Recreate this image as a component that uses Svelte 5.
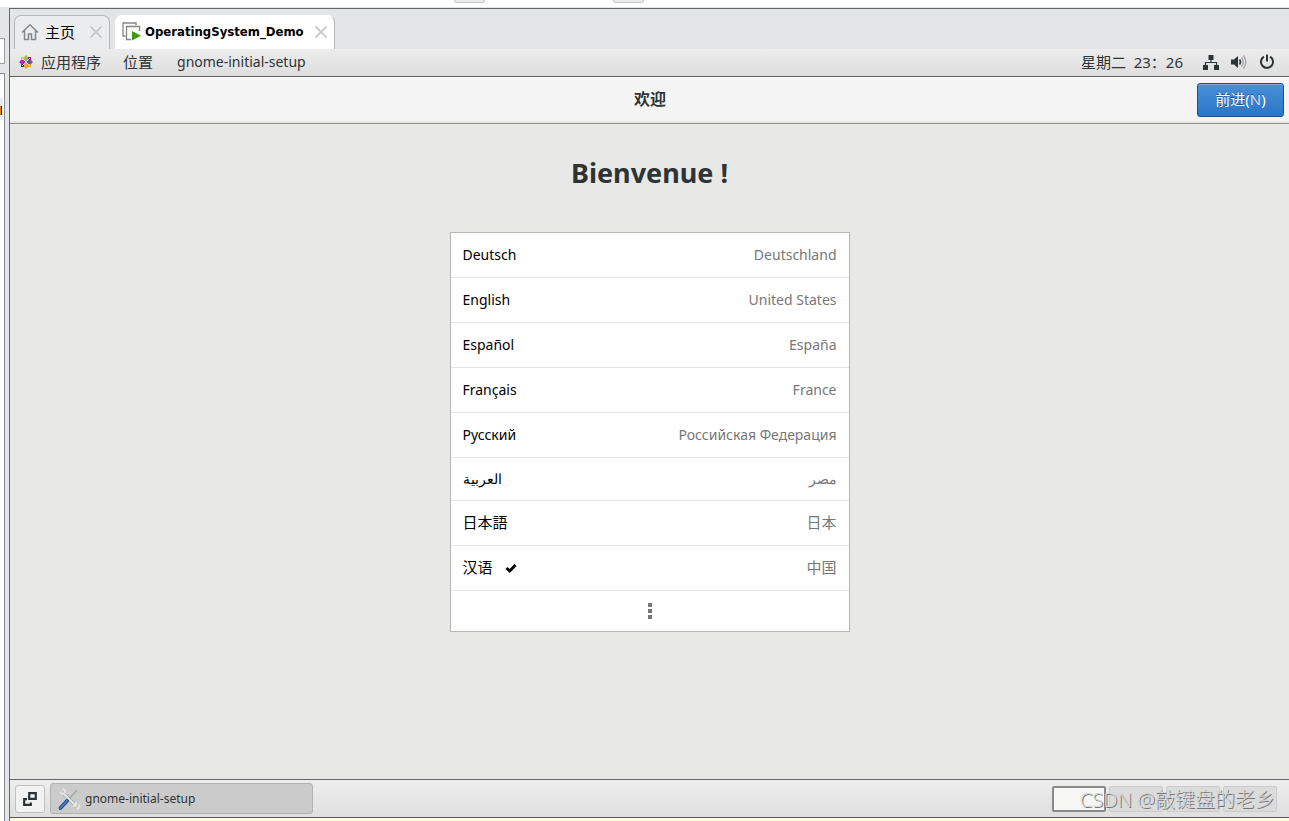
<script>
  const languages = [
    { name: 'Deutsch', country: 'Deutschland', lang: 'de' },
    { name: 'English', country: 'United States', lang: 'en' },
    { name: 'Español', country: 'España', lang: 'es' },
    { name: 'Français', country: 'France', lang: 'fr' },
    { name: 'Русский', country: 'Российская Федерация', lang: 'ru' },
    { name: 'العربية', country: 'مصر', lang: 'ar' },
    { name: '日本語', country: '日本', lang: 'ja' },
    { name: '汉语', country: '中国', lang: 'zh-CN' }
  ];
  let selected = $state('zh-CN');
</script>

<div class="page">
  <div class="ribbon"><i></i><i></i></div>
  <div class="body">
    <aside class="strip">
      <div class="field"></div>
      <div class="tree"><i></i></div>
    </aside>

    <div class="console">
      <nav class="tabs">
        <div class="tab">
          <svg class="home" width="18" height="18" viewBox="0 0 18 18"><path d="M1 9.500 9 1.800l8 7.700M3.500 7.500v9h4V11h3v5.500h4v-9" fill="none" stroke="#85878a" stroke-width="1.500"/></svg>
          <span>主页</span>
          <button class="close" aria-label="关闭"><svg width="12" height="12" viewBox="0 0 12 12"><path d="m.5.500 11 11M11.500.500l-11 11" stroke="#c6c7c9" stroke-width="1.800"/></svg></button>
        </div>
        <div class="tab active">
          <svg width="19" height="19" viewBox="0 0 19 19"><path d="M3.500 14H1V1h13v2.500" fill="none" stroke="#858585" stroke-width="1.300"/><path d="M9 17.500H4.500v-13h13V9" fill="none" stroke="#858585" stroke-width="1.300"/><path d="m10 9 9 4.800-9 4.800z" fill="#419a0e"/></svg>
          <b>OperatingSystem_Demo</b>
          <button class="close" aria-label="关闭"><svg width="12" height="12" viewBox="0 0 12 12"><path d="m.5.500 11 11M11.500.500l-11 11" stroke="#c6c7c9" stroke-width="1.800"/></svg></button>
        </div>
      </nav>

      <header class="panel">
        <button class="apps">
          <svg width="14" height="14" viewBox="0 0 14 14">
            <path d="M7 0 9 2v3.500L7 7 5 5.500V2z" fill="#9ccd2a"/>
            <path d="M14 7l-2 2H8.500L7 7l1.500-2H12z" fill="#7b4fa0"/>
            <path d="m7 14-2-2V8.500L7 7l2 1.500V12z" fill="#efa724"/>
            <path d="m0 7 2-2h3.500L7 7 5.500 9H2z" fill="#a13a8c"/>
            <path d="M2 2h3v3H2z" fill="#efb04a"/>
            <path d="M9 2h3v3H9z" fill="#932279"/>
            <path d="M9 9h3v3H9z" fill="#efa724"/>
            <path d="M2 9h3v3H2z" fill="#262577"/>
            <path d="m3 3 8 8M11 3l-8 8" stroke="#eee" stroke-width=".8"/>
          </svg>
          应用程序
        </button>
        <button>位置</button>
        <button class="latin">gnome-initial-setup</button>
        <div class="status">
          <time>星期二&nbsp; 23：26</time>
          <svg width="16" height="16" viewBox="0 0 16 16"><path d="M5.500 1h5v5h-5zM0 11h5v5H0zM11 11h5v5h-5z" fill="#2e3436"/><path d="M8 5v4M2.500 12V8.500h11V12" fill="none" stroke="#2e3436" stroke-width="1.200"/></svg>
          <svg width="16" height="16" viewBox="0 0 16 16"><path d="M0 5.500h3L7 2v12l-4-3.500H0z" fill="#2e3436"/><path d="M8.500 5.500q2 2.500 0 5" fill="none" stroke="#2e3436" stroke-width="1.600"/><path d="M10.500 3.500q3.500 4.500 0 9M12.500 1.500q4.500 6.500 0 13" fill="none" stroke="#a5a7a7" stroke-width="1.400"/></svg>
          <svg width="16" height="16" viewBox="0 0 16 16"><path d="M5 2.700a6 6 0 1 0 6 0M8 .5v7" fill="none" stroke="#2e3436" stroke-width="2"/></svg>
        </div>
      </header>

      <div class="titlebar">
        <h1>欢迎</h1>
        <button class="next">前进(<span>N</span>)</button>
      </div>

      <main>
        <h2>Bienvenue !</h2>
        <div class="list">
          {#each languages as l}
            <button class="row" lang={l.lang} onclick={() => (selected = l.lang)}>
              <span class="name">{l.name}</span>
              {#if selected === l.lang}
                <svg width="12" height="10" viewBox="0 0 12 10"><path d="m1.500 5 3.200 3L10.500 2" fill="none" stroke="#000" stroke-width="2.800"/></svg>
              {/if}
              <span class="country">{l.country}</span>
            </button>
          {/each}
          <button class="row more" aria-label="更多"><i></i><i></i><i></i></button>
        </div>
      </main>

      <footer>
        <button class="show" aria-label="显示桌面"><svg width="16" height="16" viewBox="0 0 16 16"><path d="M7.200 2.200h6.600v5.600H7.200z" fill="none" stroke="#2e3436" stroke-width="2.200"/><path d="M5 8.200H2.200v5.600h6.600V11.500" fill="none" stroke="#2e3436" stroke-width="2.200"/></svg></button>
        <button class="task">
          <svg width="24" height="24" viewBox="0 0 24 24"><path d="M20 3 11 13" stroke="#a3a5a2" stroke-width="1.200"/><path d="m5.500 5.500 14 14" stroke="#8c8f8b" stroke-width="3"/><path d="m5.500 5.500 14 14" stroke="#eee" stroke-width="1.800"/><path d="M3 5q2 3 4.500 1.500M6 2q3 1 2 4M17 20q0-3 3-3.500M20 22q3-1 2-4" fill="none" stroke="#e6e6e4" stroke-width="1.800"/><path d="m10 14-6.500 7" stroke="#204a87" stroke-width="3.800" stroke-linecap="round"/><path d="m10 14-6.500 7" stroke="#4a7fc4" stroke-width="1.800" stroke-linecap="round"/></svg>
          gnome-initial-setup
        </button>
        <div class="spaces">
          <i class="current"></i><i></i><i></i><i></i>
          <span class="mark">CSDN @敲键盘的老乡</span>
        </div>
      </footer>
    </div>
  </div>
</div>

<style>
  :global(body) { margin: 0; }
  .page {
    min-height: 100vh;
    display: flex;
    flex-direction: column;
    box-sizing: border-box;
    background: #fff;
    color: #2e3436;
    font: 14px/20px "Noto Sans", "Noto Sans CJK SC", sans-serif;
  }
  button { font: inherit; color: inherit; border: 0; padding: 0; margin: 0; background: none; }
  svg { display: block; flex: none; }
  .ribbon { height: 7px; display: flex; gap: 128px; padding-left: 454px; }
  .ribbon i { width: 29px; height: 2px; border: 1px solid #c8c8c8; border-top: 0; border-radius: 0 0 4px 4px; background: #ececec; }
  .body { flex: 1; display: flex; background: #e3e5e7; }
  .strip { width: 9px; flex: none; display: flex; flex-direction: column; padding-top: 31px; box-sizing: border-box; }
  .field { width: 4px; height: 24px; border: 1px solid #9a9da3; border-left: 0; background: #fff; }
  .tree { width: 4px; flex: 1; margin-top: 9px; padding-top: 24px; border: 1px solid #868c96; border-left: 0; border-bottom: 0; background: #fff; }
  .tree i { display: block; box-sizing: border-box; width: 3px; height: 22px; border: solid #eaeaf0; border-width: 8px 1px 5px 0; background: linear-gradient(90deg, #e08a1c 50%, #10246a 50%); }
  .console {
    flex: 1;
    min-width: 0;
    display: flex;
    flex-direction: column;
    margin-top: 1px;
    border: 1px solid #666;
    border-right: 0;
    border-bottom: 0;
  }
  .tabs { display: flex; gap: 5px; padding: 6px 4px 0; height: 34px; background: #e3e4e6; }
  .tab { display: flex; align-items: center; box-sizing: border-box; width: 96px; padding: 0 7px 2px 6px; border: 1px solid #b4b6b8; border-bottom: 0; border-radius: 7px 7px 0 0; background: #ebecee; color: #000; font-size: 15px; }
  .tab .close { margin-left: auto; }
  .tab .home { margin-right: 6px; }
  .tab.active { width: 220px; background: #fff; border-color: #fff #b4b6b8 #fff #fff; gap: 4px; }
  .tab b { font: bold 13px/20px "DejaVu Sans Condensed", "DejaVu Sans", sans-serif; }
  .panel { display: flex; align-items: center; gap: 22px; height: 25px; padding: 0 14px 2px 9px; background: linear-gradient(#ececec, #dedede); border-bottom: 1px solid #5c5e5c; font-size: 15px; }
  .panel .latin { font-size: 14px; margin-left: 2px; }
  .apps { display: flex; align-items: center; gap: 8px; }
  .status { display: flex; align-items: center; gap: 12px; margin-left: auto; }
  .status time { margin-right: 8px; }
  .titlebar { display: grid; grid-template-columns: 1fr auto 1fr; align-items: center; height: 46px; padding: 0 5px 0 6px; background: #f4f4f4; border-bottom: 1px solid #8b8e8b; box-shadow: inset 0 1px #fff, inset 0 -2px #e6e6e4; }
  h1 { grid-column: 2; margin: 0; padding-bottom: 2px; font-size: 16px; line-height: 20px; }
  .next { justify-self: end; width: 87px; height: 34px; padding-bottom: 2px; border: 1px solid #1c5187; border-radius: 3px; background: linear-gradient(#4a90d9, #2a76c6); box-shadow: inset 0 1px #78aee5; color: #fff; font-size: 15px; text-shadow: 0 -1px rgba(0, 0, 0, .4); }
  .next span { color: #d6e6f7; }
  main { flex: 1; display: flex; flex-direction: column; align-items: center; background: #e8e8e7; }
  h2 { margin: 30px 0 40px; font-size: 27px; line-height: 38px; }
  .list { width: 398px; max-width: 90%; border: 1px solid #b6b6b3; background: #fff; }
  .row { display: flex; align-items: center; width: 100%; height: 45px; box-sizing: border-box; padding: 0 12px; border-bottom: 1px solid #e4e4e4; color: #000; }
  .row[lang="ar"] { height: 43px; }
  .row[lang="ja"], .row[lang="zh-CN"] { font-size: 15px; }
  .row[lang="ja"] span, .row[lang="zh-CN"] span { padding-bottom: 2px; }
  .row svg { margin-left: 12px; }
  .country { margin-left: auto; color: #777; }
  .row.more { flex-direction: column; justify-content: center; gap: 2px; height: 40px; border-bottom: 0; }
  .more i { width: 4px; height: 4px; background: #777; }
  footer { display: flex; align-items: center; gap: 5px; height: 37px; padding: 0 12px 0 5px; border-top: 1px solid #666; border-bottom: 1px solid #555; background: linear-gradient(#ededed, #dfdfdf); box-shadow: 0 3px #fffde3; margin-bottom: 3px; font-size: 12px; }
  .show { display: grid; place-items: center; width: 30px; height: 28px; border: 1px solid #c0c0c0; border-radius: 3px; background: #f2f2f2; }
  .task { display: flex; align-items: center; gap: 4px; width: 263px; height: 31px; padding: 0 6px; border: 1px solid #b2b2b2; border-radius: 3px; background: #cbcbcb; }
  .spaces { position: relative; display: flex; gap: 3px; margin-left: auto; }
  .spaces i { box-sizing: border-box; width: 54px; height: 26px; border: 1px solid #cbcbcb; border-radius: 2px; background: #dbdbdb; }
  .spaces .current { border: 2px solid #888; background: #f6f6f5; }
  .mark { position: absolute; right: 2px; top: 0; white-space: nowrap; font-size: 20px; line-height: 28px; font-weight: 300; color: #d6d6d6; text-shadow: 1px 1px #777; }
</style>
